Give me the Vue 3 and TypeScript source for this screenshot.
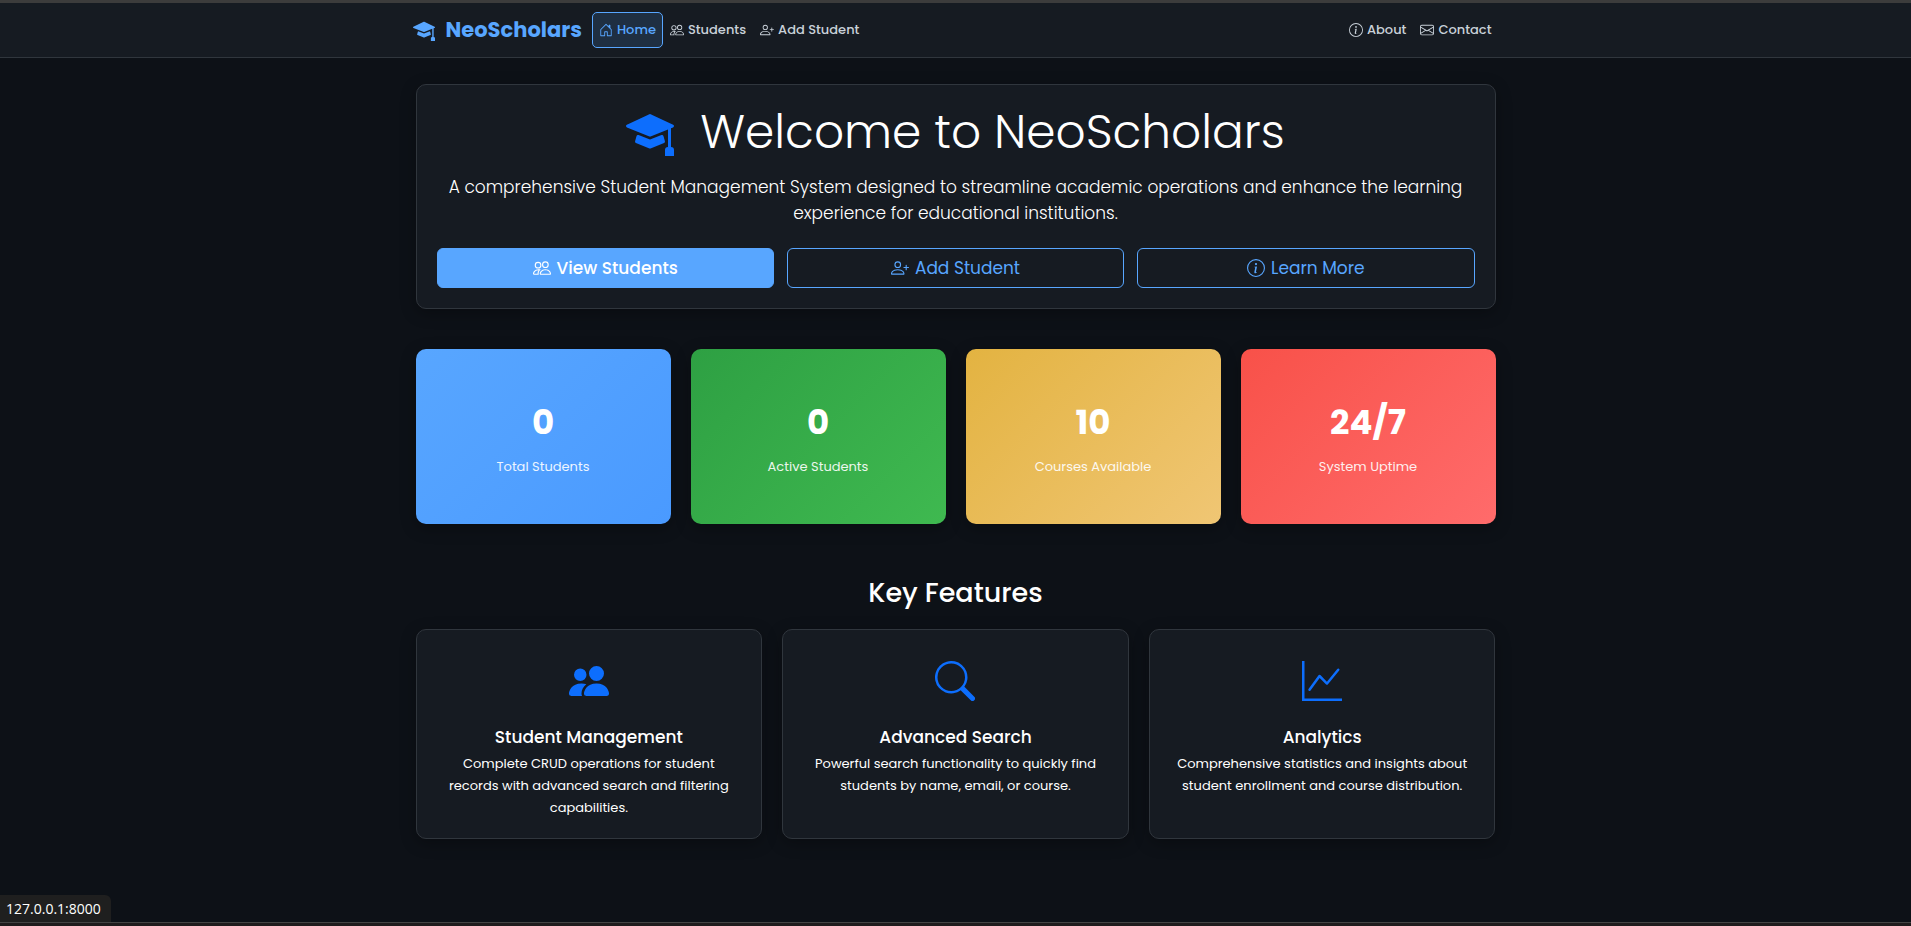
<script setup lang="ts">
interface Link { label: string; icon: string; active?: boolean }
interface Stat { value: string; label: string; tone: string }
interface Feature { title: string; text: string; icon: string }

const icons: Record<string, string[]> = {
  cap: [
    'M8.211 2.047a.5.5 0 0 0-.422 0l-7.5 3.5a.5.5 0 0 0 .025.917l7.5 3a.5.5 0 0 0 .372 0L14 7.14V13a1 1 0 0 0-1 1v2h3v-2a1 1 0 0 0-1-1V6.739l.686-.275a.5.5 0 0 0 .025-.917z',
    'M4.176 9.032a.5.5 0 0 0-.656.327l-.5 1.7a.5.5 0 0 0 .294.605l4.5 1.8a.5.5 0 0 0 .372 0l4.5-1.8a.5.5 0 0 0 .294-.605l-.5-1.7a.5.5 0 0 0-.656-.327L8 10.466z',
  ],
  house: [
    'M8.354 1.146a.5.5 0 0 0-.708 0l-6 6A.5.5 0 0 0 1.5 7.5v7a.5.5 0 0 0 .5.5h4.5a.5.5 0 0 0 .5-.5v-4h2v4a.5.5 0 0 0 .5.5H14a.5.5 0 0 0 .5-.5v-7a.5.5 0 0 0-.146-.354L13 5.793V2.5a.5.5 0 0 0-.5-.5h-1a.5.5 0 0 0-.5.5v1.293zM2.5 14V7.707l5.5-5.5 5.5 5.5V14H10v-4a.5.5 0 0 0-.5-.5h-3a.5.5 0 0 0-.5.5v4z',
  ],
  people: [
    'M15 14s1 0 1-1-1-4-5-4-5 3-5 4 1 1 1 1zm-7.978-1L7 12.996c.001-.264.167-1.03.76-1.72C8.312 10.629 9.282 10 11 10c1.717 0 2.687.63 3.24 1.276.593.69.758 1.457.76 1.72l-.008.002-.014.002zM11 7a2 2 0 1 0 0-4 2 2 0 0 0 0 4m3-2a3 3 0 1 1-6 0 3 3 0 0 1 6 0M6.936 9.28a6 6 0 0 0-1.23-.247A7 7 0 0 0 5 9c-4 0-5 3-5 4q0 1 1 1h4.216A2.24 2.24 0 0 1 5 13c0-1.01.377-2.042 1.09-2.904.243-.294.526-.569.846-.816M4.92 10A5.5 5.5 0 0 0 4 13H1c0-.26.164-1.03.76-1.724.545-.636 1.492-1.256 3.16-1.275ZM1.5 5.5a3 3 0 1 1 6 0 3 3 0 0 1-6 0m3-2a2 2 0 1 0 0 4 2 2 0 0 0 0-4',
  ],
  peopleFill: [
    'M7 14s-1 0-1-1 1-4 5-4 5 3 5 4-1 1-1 1zm4-6a3 3 0 1 0 0-6 3 3 0 0 0 0 6m-5.784 6A2.24 2.24 0 0 1 5 13c0-1.355.68-2.75 1.936-3.72A6.3 6.3 0 0 0 5 9c-4 0-5 3-5 4s1 1 1 1zM4.5 8a2.5 2.5 0 1 0 0-5 2.5 2.5 0 0 0 0 5',
  ],
  personPlus: [
    'M6 8a3 3 0 1 0 0-6 3 3 0 0 0 0 6m2-3a2 2 0 1 1-4 0 2 2 0 0 1 4 0m4 8c0 1-1 1-1 1H1s-1 0-1-1 1-4 6-4 6 3 6 4m-1-.004c-.001-.246-.154-.986-.832-1.664C9.516 10.68 8.289 10 6 10s-3.516.68-4.168 1.332c-.678.678-.83 1.418-.832 1.664z',
    'M13.5 5a.5.5 0 0 1 .5.5V7h1.5a.5.5 0 0 1 0 1H14v1.5a.5.5 0 0 1-1 0V8h-1.5a.5.5 0 0 1 0-1H13V5.5a.5.5 0 0 1 .5-.5',
  ],
  info: [
    'M8 15A7 7 0 1 1 8 1a7 7 0 0 1 0 14m0 1A8 8 0 1 0 8 0a8 8 0 0 0 0 16',
    'm8.93 6.588-2.29.287-.082.38.45.083c.294.07.352.176.288.469l-.738 3.468c-.194.897.105 1.319.808 1.319.545 0 1.178-.252 1.465-.598l.088-.416c-.2.176-.492.246-.686.246-.275 0-.375-.193-.304-.533zM9 4.5a1 1 0 1 1-2 0 1 1 0 0 1 2 0',
  ],
  envelope: [
    'M0 4a2 2 0 0 1 2-2h12a2 2 0 0 1 2 2v8a2 2 0 0 1-2 2H2a2 2 0 0 1-2-2zm2-1a1 1 0 0 0-1 1v.217l7 4.2 7-4.2V4a1 1 0 0 0-1-1zm13 2.383-4.708 2.825L15 11.105zm-.034 6.876-5.64-3.471L8 9.583l-1.326-.795-5.64 3.47A1 1 0 0 0 2 13h12a1 1 0 0 0 .966-.741M1 11.105l4.708-2.897L1 5.383z',
  ],
  search: [
    'M11.742 10.344a6.5 6.5 0 1 0-1.397 1.398h-.001q.044.06.098.115l3.85 3.85a1 1 0 0 0 1.415-1.414l-3.85-3.85a1 1 0 0 0-.115-.1zM12 6.5a5.5 5.5 0 1 1-11 0 5.5 5.5 0 0 1 11 0',
  ],
  graph: [
    'M0 0h1v15h15v1H0zm14.817 3.113a.5.5 0 0 1 .07.704l-4.5 5.5a.5.5 0 0 1-.74.037L7.06 6.767l-3.656 5.027a.5.5 0 0 1-.808-.588l4-5.5a.5.5 0 0 1 .758-.06l2.609 2.61 4.15-5.073a.5.5 0 0 1 .704-.07',
  ],
}

const mainLinks: Link[] = [
  { label: 'Home', icon: 'house', active: true },
  { label: 'Students', icon: 'people' },
  { label: 'Add Student', icon: 'personPlus' },
]
const sideLinks: Link[] = [
  { label: 'About', icon: 'info' },
  { label: 'Contact', icon: 'envelope' },
]
const actions: Link[] = [
  { label: 'View Students', icon: 'people', active: true },
  { label: 'Add Student', icon: 'personPlus' },
  { label: 'Learn More', icon: 'info' },
]
const stats: Stat[] = [
  { value: '0', label: 'Total Students', tone: 'blue' },
  { value: '0', label: 'Active Students', tone: 'green' },
  { value: '10', label: 'Courses Available', tone: 'gold' },
  { value: '24/7', label: 'System Uptime', tone: 'red' },
]
const features: Feature[] = [
  { title: 'Student Management', icon: 'peopleFill', text: 'Complete CRUD operations for student records with advanced search and filtering capabilities.' },
  { title: 'Advanced Search', icon: 'search', text: 'Powerful search functionality to quickly find students by name, email, or course.' },
  { title: 'Analytics', icon: 'graph', text: 'Comprehensive statistics and insights about student enrollment and course distribution.' },
]
</script>

<template>
  <div class="page">
    <header class="topbar">
      <nav class="bar" aria-label="Main">
        <a class="brand" href="#">
          <svg class="icon" viewBox="0 0 16 16" aria-hidden="true"><path v-for="d in icons.cap" :key="d" :d="d" /></svg>
          <span>NeoScholars</span>
        </a>
        <ul class="links">
          <li v-for="l in mainLinks" :key="l.label">
            <a href="#" class="link" :class="{ active: l.active }">
              <svg class="icon" viewBox="0 0 16 16" aria-hidden="true"><path v-for="d in icons[l.icon]" :key="d" :d="d" /></svg>
              <span>{{ l.label }}</span>
            </a>
          </li>
        </ul>
        <ul class="links side">
          <li v-for="l in sideLinks" :key="l.label">
            <a href="#" class="link">
              <svg class="icon" viewBox="0 0 16 16" aria-hidden="true"><path v-for="d in icons[l.icon]" :key="d" :d="d" /></svg>
              <span>{{ l.label }}</span>
            </a>
          </li>
        </ul>
      </nav>
    </header>

    <main class="content">
      <section class="card hero">
        <h1>
          <svg class="icon" viewBox="0 0 16 16" aria-hidden="true"><path v-for="d in icons.cap" :key="d" :d="d" /></svg>
          <span>Welcome to NeoScholars</span>
        </h1>
        <p class="lead">A comprehensive Student Management System designed to streamline academic operations and enhance the learning experience for educational institutions.</p>
        <div class="actions">
          <a v-for="a in actions" :key="a.label" href="#" class="btn" :class="{ solid: a.active }">
            <svg class="icon" viewBox="0 0 16 16" aria-hidden="true"><path v-for="d in icons[a.icon]" :key="d" :d="d" /></svg>
            <span>{{ a.label }}</span>
          </a>
        </div>
      </section>

      <section class="stats" aria-label="Statistics">
        <div v-for="s in stats" :key="s.label" class="stat" :class="s.tone">
          <div class="value">{{ s.value }}</div>
          <div class="label">{{ s.label }}</div>
        </div>
      </section>

      <h2>Key Features</h2>
      <section class="features">
        <article v-for="f in features" :key="f.title" class="card feature">
          <svg class="icon" viewBox="0 0 16 16" aria-hidden="true"><path v-for="d in icons[f.icon]" :key="d" :d="d" /></svg>
          <h3>{{ f.title }}</h3>
          <p>{{ f.text }}</p>
        </article>
      </section>
    </main>

    <footer class="status"><span>127.0.0.1:8000</span></footer>
  </div>
</template>

<style>
body {
  margin: 0;
  background: #0d1117;
}
</style>

<style scoped>
.page {
  box-sizing: border-box;
  min-height: 100vh;
  display: flex;
  flex-direction: column;
  border-top: 3px solid #3c3c3c;
  border-bottom: 3px solid #1f1c1d;
  background: #0d1117;
  color: #fff;
  font-family: Poppins, Inter, "Open Sans", sans-serif;
  font-size: 13px;
  line-height: 22px;
}
.icon {
  display: block;
  flex: none;
  width: 1em;
  height: 1em;
  fill: currentColor;
}
a {
  color: inherit;
  text-decoration: none;
}
h1, h2, h3, p, ul {
  margin: 0;
  padding: 0;
}
.topbar {
  background: #161b22;
  border-bottom: 1px solid #30363d;
}
.bar {
  box-sizing: border-box;
  max-width: 1086px;
  height: 54px;
  margin: 0 auto;
  display: flex;
  align-items: center;
}
.brand {
  display: flex;
  align-items: center;
  gap: 11px;
  margin-right: 10px;
  color: #58a6ff;
  font-size: 21px;
  font-weight: 700;
}
.brand .icon {
  width: 22px;
  height: 22px;
}
.links {
  display: flex;
  list-style: none;
}
.side {
  margin-left: auto;
}
.link {
  display: flex;
  align-items: center;
  gap: 4px;
  padding: 6px;
  border: 1px solid transparent;
  border-radius: 5px;
  color: #c9d1d9;
  font-weight: 500;
}
.link .icon {
  width: 14px;
  height: 14px;
}
.link.active {
  color: #58a6ff;
  border-color: #58a6ff;
  background: #1f2f42;
}
.content {
  box-sizing: border-box;
  width: 100%;
  max-width: 1080px;
  margin: 0 auto;
  padding-top: 26px;
  flex: 1;
}
.card {
  border: 1px solid #30363d;
  border-radius: 10px;
  background: #161b22;
  box-shadow: 0 4px 16px rgba(0, 0, 0, 0.3);
}
.hero {
  padding: 20px;
  text-align: center;
}
h1 {
  display: flex;
  justify-content: center;
  align-items: center;
  gap: 26px;
  font-size: 47px;
  line-height: 54px;
  font-weight: 300;
}
h1 .icon {
  width: 48px;
  height: 48px;
  color: #0d6efd;
}
.lead {
  padding-top: 15px;
  font-size: 17px;
  line-height: 26px;
  font-weight: 300;
}
.actions {
  display: grid;
  grid-template-columns: repeat(3, 1fr);
  gap: 13px;
  margin-top: 22px;
}
.btn {
  display: flex;
  align-items: center;
  justify-content: center;
  gap: 6px;
  padding: 8px;
  border: 1px solid #58a6ff;
  border-radius: 6px;
  color: #58a6ff;
  font-size: 17px;
}
.btn .icon {
  width: 18px;
  height: 18px;
}
.btn.solid {
  background: #58a6ff;
  color: #fff;
  font-weight: 500;
}
.stats {
  display: grid;
  grid-template-columns: repeat(4, 1fr);
  gap: 20px;
  margin-top: 40px;
}
.stat {
  padding: 48px 16px 46px;
  border-radius: 10px;
  text-align: center;
  box-shadow: 0 4px 16px rgba(0, 0, 0, 0.3);
}
.blue { background: linear-gradient(135deg, #58a6ff, #4a9aff); }
.green { background: linear-gradient(135deg, #2ea043, #3fb950); }
.gold { background: linear-gradient(135deg, #e3b341, #f0c674); }
.red { background: linear-gradient(135deg, #f85149, #ff6b6b); }
.value {
  font-size: 34px;
  line-height: 50px;
  font-weight: 700;
}
.label {
  margin-top: 9px;
  opacity: 0.9;
}
h2 {
  margin: 52px 0 19px;
  text-align: center;
  font-size: 27px;
  line-height: 34px;
  font-weight: 500;
}
.features {
  display: grid;
  grid-template-columns: repeat(3, 1fr);
  gap: 20px;
}
.feature {
  padding: 31px 20px 19px;
  display: flex;
  flex-direction: column;
  align-items: center;
  text-align: center;
}
.feature .icon {
  width: 40px;
  height: 40px;
  color: #0d6efd;
}
h3 {
  margin: 25px 0 5px;
  font-size: 17px;
  line-height: 22px;
  font-weight: 500;
}
.status {
  display: flex;
  height: 27px;
  border-bottom: 1px solid #444;
  font-family: "Open Sans", sans-serif;
  font-size: 14px;
}
.status span {
  box-sizing: border-box;
  padding: 3px 10px 0 6px;
  border-radius: 0 6px 0 0;
  background: #1f1f1f;
}
</style>
